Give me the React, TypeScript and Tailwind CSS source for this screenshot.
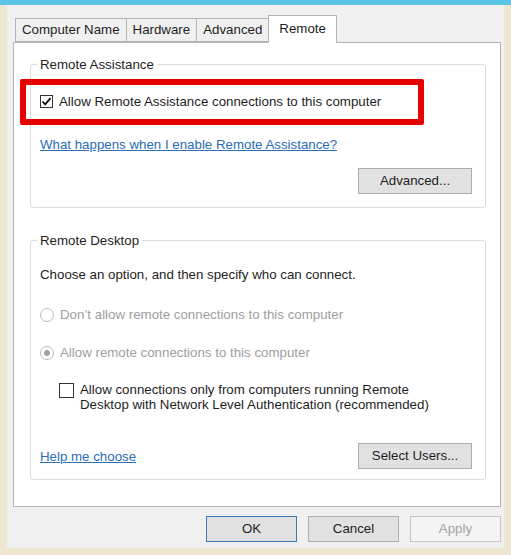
const font = { fontFamily: '"Liberation Sans", Arial, sans-serif' };

const Check = ({ checked }: { checked?: boolean }) => (
  <span className="w-[13px] h-[13px] border border-[#333333] bg-white flex items-center justify-center shrink-0">
    {checked && (
      <svg width="11" height="11" viewBox="0 0 11 11">
        <path d="M1.5 5.5 L4.2 8.3 L9.5 2.2" fill="none" stroke="#111" strokeWidth="1.8" />
      </svg>
    )}
  </span>
);

const Radio = ({ checked }: { checked?: boolean }) => (
  <span className="w-[14px] h-[14px] rounded-full border border-[#bcbcbc] bg-white flex items-center justify-center shrink-0">
    {checked && <span className="w-[6px] h-[6px] rounded-full bg-[#a0a0a0]" />}
  </span>
);

const Button = ({ label, variant }: { label: string; variant?: 'default' | 'disabled' }) => {
  const cls =
    variant === 'default'
      ? 'border-[#3d7ab3] bg-[#e1e1e1] text-[#1e1e1e]'
      : variant === 'disabled'
        ? 'border-[#c6c6c6] bg-[#f4f4f4] text-[#a3a3a3]'
        : 'border-[#adadad] bg-[#e1e1e1] text-[#1e1e1e]';
  return (
    <button className={`h-[26px] border flex items-center justify-center text-[13.3px] ${cls}`}>{label}</button>
  );
};

export default function App() {
  return (
    <div className="w-[511px] h-[555px] bg-[#efe8d5] flex flex-col overflow-hidden" style={font}>
      <div className="h-[5px] bg-[#5cc4e6]" />
      <div className="flex flex-1">
        <div className="w-[7px] bg-[#eee6d1]" />
        <div className="flex-1 bg-[#f0f0f0] flex flex-col pl-[6px] pr-[3px] text-[13.3px] text-[#1e1e1e]">
          <div className="flex items-end mt-[10px] ml-[2px] relative z-10 h-[27px]">
            <div className="h-[24px] px-[6px] border border-[#b5b5b5] bg-[#f0f0f0] flex items-center">Computer Name</div>
            <div className="h-[24px] px-[6px] -ml-px border border-[#b5b5b5] bg-[#f0f0f0] flex items-center">Hardware</div>
            <div className="h-[24px] px-[6px] -ml-px border border-[#b5b5b5] bg-[#f0f0f0] flex items-center">Advanced</div>
            <div className="h-[28px] px-[10px] -ml-px -mb-px border border-b-0 border-[#b5b5b5] bg-white flex items-start pt-[3px]">Remote</div>
          </div>

          <div className="relative border border-[#b5b5b5] bg-white h-[465px] pl-[16px] pr-[14px] pt-[14px]">
            <fieldset className="border border-[#dcdcdc] rounded-[3px] pl-[9px] pr-[13px] pb-[13px]">
              <legend className="-ml-[3px] px-[3px] leading-[15px]">Remote Assistance</legend>
              <div className="flex items-center gap-[6px] mt-[22px] h-[15px] leading-[15px]">
                <Check checked />
                <span>Allow Remote Assistance connections to this computer</span>
              </div>
              <div className="mt-[28px] h-[15px] leading-[15px] text-[#2a6db5] underline">
                What happens when I enable Remote Assistance?
              </div>
              <div className="flex justify-end mt-[16px]">
                <div className="w-[114px] flex flex-col">
                  <Button label="Advanced..." />
                </div>
              </div>
            </fieldset>

            <fieldset className="mt-[25px] border border-[#dcdcdc] rounded-[3px] pl-[9px] pr-[13px] pb-[10px]">
              <legend className="-ml-[3px] px-[3px] leading-[15px]">Remote Desktop</legend>
              <div className="mt-[19px] h-[15px] leading-[15px]">Choose an option, and then specify who can connect.</div>
              <div className="flex items-center gap-[6px] mt-[25px] h-[15px] leading-[15px] text-[#9e9e9e]">
                <Radio />
                <span>Don’t allow remote connections to this computer</span>
              </div>
              <div className="flex items-center gap-[6px] mt-[23px] h-[15px] leading-[15px] text-[#9e9e9e]">
                <Radio checked />
                <span>Allow remote connections to this computer</span>
              </div>
              <div className="flex items-start gap-[6px] mt-[22px] ml-[19px] leading-[15px]">
                <span className="mt-[1px] w-[15px] h-[15px] border border-[#333333] bg-white shrink-0" />
                <span>
                  Allow connections only from computers running Remote
                  <br />
                  Desktop with Network Level Authentication (recommended)
                </span>
              </div>
              <div className="flex items-center justify-between mt-[31px]">
                <span className="text-[#2a6db5] underline leading-[15px]">Help me choose</span>
                <div className="w-[114px] flex flex-col">
                  <Button label="Select Users..." />
                </div>
              </div>
            </fieldset>

            <div className="absolute left-[6px] top-[36px] w-[404px] h-[46px] border-[6px] border-[#e60000] rounded-[2px]" />
          </div>

          <div className="flex justify-end gap-[11px] mt-[9px]">
            <div className="w-[91px] flex flex-col"><Button label="OK" variant="default" /></div>
            <div className="w-[91px] flex flex-col"><Button label="Cancel" /></div>
            <div className="w-[91px] flex flex-col"><Button label="Apply" variant="disabled" /></div>
          </div>
        </div>
        <div className="w-[7px] bg-[#eee6d1]" />
      </div>
      <div className="h-[7px] bg-[#eee6d1]" />
    </div>
  );
}
